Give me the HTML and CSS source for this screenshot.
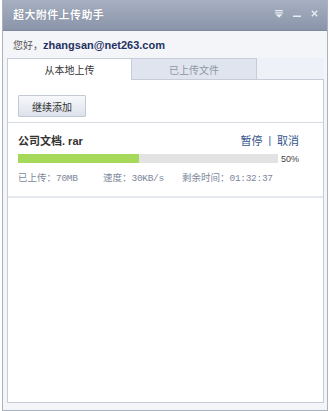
FILE: index.html
```html
<!DOCTYPE html>
<html lang="zh">
<head>
<meta charset="utf-8">
<title>超大附件上传助手</title>
<link rel="stylesheet" href="styles.css">
</head>
<body>
<div class="window">
  <div class="titlebar">
    <span class="title">超大附件上传助手</span>
    <div class="tools">
      <svg class="ico" width="8" height="8" viewBox="0 0 8 8"><rect x="0" y="0" width="8" height="1.2" fill="#e9edf3"/><rect x="0" y="2.2" width="8" height="1.2" fill="#e9edf3"/><path d="M0.5 4.3 L7.5 4.3 L4 7.8 Z" fill="#e9edf3"/></svg>
      <svg class="ico" width="8" height="8" viewBox="0 0 8 8"><rect x="0" y="5.5" width="8" height="1.5" fill="#e9edf3"/></svg>
      <svg class="ico" width="7" height="7" viewBox="0 0 7 7"><path d="M0.8 0.8 L6.2 6.2 M6.2 0.8 L0.8 6.2" stroke="#e9edf3" stroke-width="1.4"/></svg>
    </div>
  </div>
  <div class="greeting">您好，<b class="email">zhangsan@net263.com</b></div>
  <div class="tabs">
    <div class="tab active">从本地上传</div>
    <div class="tab second">已上传文件</div>
    <div class="tab-fill"></div>
  </div>
  <div class="panel">
    <div class="toolbar">
      <button class="btn">继续添加</button>
    </div>
    <div class="list">
      <div class="item">
        <div class="item-head">
          <span class="fname">公司文档<span class="ext">. rar</span></span>
          <span class="actions"><a>暂停</a><span class="sep">|</span><a>取消</a></span>
        </div>
        <div class="progress-row">
          <div class="bar"><div class="fill" style="width:46.5%"></div></div>
          <span class="pct">50%</span>
        </div>
        <div class="stats">
          <span class="s1">已上传：<span class="num">70MB</span></span>
          <span class="s2">速度：<span class="num">30KB/s</span></span>
          <span>剩余时间：<span class="num">01:32:37</span></span>
        </div>
      </div>
    </div>
  </div>
</div>
</body>
</html>
```

FILE: styles.css
```css
html, body {
  margin: 0;
  padding: 0;
  background: #ffffff;
}
body {
  font-family: "Noto Sans CJK SC", "Liberation Sans", sans-serif;
  font-size: 10px;
  color: #333;
}
.window {
  margin: 0 1px 0 2px;
  height: 410px;
  border: 1px solid #aab2c0;
  border-top: none;
  background: #f3f5f9;
  display: flex;
  flex-direction: column;
}
.titlebar {
  height: 31px;
  flex: none;
  display: flex;
  align-items: center;
  justify-content: space-between;
  padding: 0 9px 0 10px;
  background: linear-gradient(#a7b0c1, #8a95aa);
  border-bottom: 1px solid #7f8aa0;
  box-sizing: border-box;
}
.title {
  color: #fff;
  font-weight: bold;
  font-size: 11px;
  letter-spacing: 0.4px;
  text-shadow: 0 0 1px rgba(60, 70, 90, 0.6);
  margin-top: -2px;
}
.tools {
  display: flex;
  align-items: center;
  gap: 10px;
  margin-top: -3px;
}
.ico { display: block; }
.greeting {
  height: 27px;
  flex: none;
  display: flex;
  align-items: center;
  padding-left: 10px;
  color: #555;
  font-size: 10px;
}
.email {
  font-family: "Liberation Sans", sans-serif;
  font-size: 11px;
  color: #1f3260;
  font-weight: bold;
}
.tabs {
  display: flex;
  height: 22px;
  flex: none;
  padding-left: 4px;
}
.tab {
  width: 124px;
  box-sizing: border-box;
  text-align: center;
  line-height: 21px;
  font-size: 10px;
  color: #8f96a3;
  background: #dfe4ee;
  border: 1px solid #c6cdd9;
}
.tab.second { width: 126px; }
.tab.active {
  color: #333;
  background: #fff;
  border-bottom: none;
  border-right: none;
}
.tab-fill {
  flex: 1;
  margin-right: 3px;
  background: #eef1f7;
  border-bottom: 1px solid #c6cdd9;
}
.panel {
  flex: 1;
  margin: 0 3px 7px 4px;
  background: #fff;
  border: 1px solid #c6cdd9;
  border-top: none;
  display: flex;
  flex-direction: column;
}
.toolbar {
  padding: 15px 0 0 10px;
  height: 42px;
  box-sizing: border-box;
}
.btn {
  width: 68px;
  height: 22px;
  padding: 0;
  font-family: "Noto Sans CJK SC", sans-serif;
  font-size: 10px;
  color: #333;
  background: linear-gradient(#f7f8fb, #dce2eb);
  border: 1px solid #c3cad6;
  border-radius: 1px;
}
.list {
  flex: 1;
  border-top: 1px solid #d7dce4;
}
.item {
  padding: 9px 24px 0 10px;
  height: 75px;
  box-sizing: border-box;
  border-bottom: 2px solid #e5e8ee;
}
.item-head {
  height: 16px;
  display: flex;
  align-items: center;
  justify-content: space-between;
}
.fname {
  font-weight: bold;
  font-size: 11px;
  color: #333;
}
.ext {
  font-family: "Liberation Sans", sans-serif;
  font-size: 11px;
}
.actions {
  color: #35548a;
  font-size: 11px;
  display: flex;
  align-items: center;
}
.sep {
  margin: 0 6px;
  font-family: "Liberation Sans", sans-serif;
  font-size: 10px;
}
.progress-row {
  margin-top: 5px;
  display: flex;
  align-items: center;
}
.bar {
  width: 260px;
  height: 9px;
  background: #e3e3e3;
}
.fill {
  height: 100%;
  background: #a6d95a;
}
.pct {
  flex: 1;
  text-align: right;
  font-family: "Liberation Sans", sans-serif;
  font-size: 9px;
  color: #444;
  margin-top: 1px;
}
.stats {
  margin-top: 6px;
  height: 14px;
  display: flex;
  align-items: center;
  color: #7d889b;
  font-size: 9.5px;
}
.s1 { width: 85px; }
.s2 { width: 79px; }
.num {
  font-family: "Liberation Mono", monospace;
  font-size: 9.5px;
  letter-spacing: -0.3px;
}
```
